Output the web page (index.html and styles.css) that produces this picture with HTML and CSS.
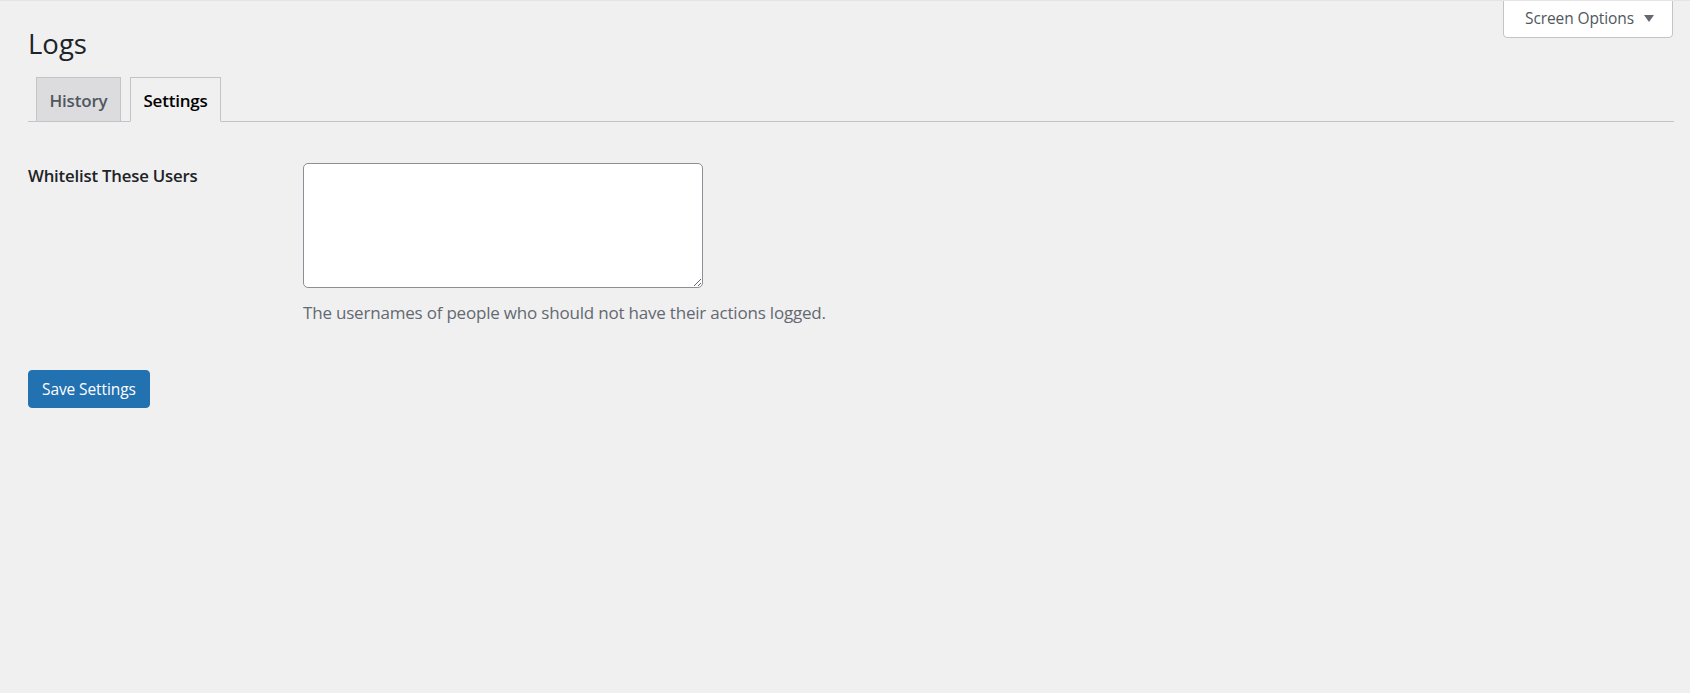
FILE: index.html
```html
<!DOCTYPE html>
<html lang="en">
  <head>
    <meta charset="UTF-8" />
    <meta name="viewport" content="width=device-width, initial-scale=1.0" />
    <title>Logs ‹ Settings</title>
    <link rel="stylesheet" href="styles.css">
  </head>
  <body>
    <div class="wrap">
      <div class="screen-meta-links">
        <button type="button" class="screen-meta-toggle">
          Screen Options
          <svg class="toggle-arrow" width="10" height="7" viewBox="0 0 10 7" aria-hidden="true">
            <path d="M0 0h10L5 7z" />
          </svg>
        </button>
      </div>

      <h1 class="page-title">Logs</h1>

      <nav class="nav-tab-wrapper">
        <a href="#history" class="nav-tab">History</a>
        <a href="#settings" class="nav-tab nav-tab-active">Settings</a>
      </nav>

      <form class="settings-form" method="post">
        <div class="form-row">
          <label for="whitelist" class="form-label">Whitelist These Users</label>
          <div class="form-field">
            <textarea id="whitelist" name="whitelist" class="field-textarea"></textarea>
            <p class="description">The usernames of people who should not have their actions logged.</p>
          </div>
        </div>

        <p class="submit">
          <button type="submit" class="button-primary">Save Settings</button>
        </p>
      </form>
    </div>
  </body>
</html>
```

FILE: styles.css
```css
:root {
  --page-bg: #f0f0f1;
  --text: #1d2327;
  --muted: #646970;
  --tab-text: #50575e;
  --border: #c3c4c7;
  --input-border: #8c8f94;
  --primary: #2271b1;
}
html {
  font-size: 16px;
}
body {
  margin: 0;
  min-height: 100vh;
  box-sizing: border-box;
  background-color: var(--page-bg);
  border-top: 1px solid #e4e4e5;
  color: var(--text);
  font-family: "Open Sans", "Noto Sans", sans-serif;
  -webkit-font-smoothing: antialiased;
}
.wrap {
  padding: 0 16px 0 28px;
}

/* Screen Options pull-down tab in the top right corner */
.screen-meta-links {
  float: right;
  margin-top: -2px;
  margin-right: 1px;
}
.screen-meta-toggle {
  display: flex;
  align-items: center;
  gap: 10px;
  width: 170px;
  height: 39px;
  padding: 0 0 2px 21px;
  box-sizing: border-box;
  background: #fff;
  border: 1px solid var(--border);
  border-radius: 0 0 4px 4px;
  color: var(--tab-text);
  font-family: inherit;
  font-size: 15.5px;
  letter-spacing: -0.1px;
  cursor: pointer;
}
.toggle-arrow {
  fill: #646970;
  margin-top: 1px;
}

.page-title {
  margin: 0;
  padding-top: 25px;
  font-size: 27.5px;
  font-weight: 400;
  line-height: 36px;
}

/* Tabs */
.nav-tab-wrapper {
  display: flex;
  margin-top: 15px;
  padding-left: 8px;
  border-bottom: 1px solid var(--border);
}
.nav-tab {
  margin: 0 9px -1px 0;
  padding: 7px 12.5px 5px;
  background: #dcdcde;
  border: 1px solid var(--border);
  color: var(--tab-text);
  font-size: 17px;
  font-weight: 600;
  letter-spacing: -0.2px;
  line-height: 31px;
  text-decoration: none;
}
.nav-tab-active {
  background: var(--page-bg);
  border-bottom-color: var(--page-bg);
  color: #000;
}

/* Settings table */
.form-row {
  display: grid;
  grid-template-columns: 275px 1fr;
  margin-top: 41px;
}
.form-label {
  padding-top: 1px;
  font-size: 16.8px;
  font-weight: 600;
  letter-spacing: -0.2px;
  line-height: 24px;
}
.field-textarea {
  display: block;
  width: 400px;
  height: 125px;
  box-sizing: border-box;
  margin: 0;
  background: #fff;
  border: 1px solid var(--input-border);
  border-radius: 5px;
  font-family: inherit;
  font-size: 16px;
}
.description {
  margin: 13px 0 0;
  color: var(--muted);
  font-size: 17px;
  letter-spacing: -0.2px;
  line-height: 24px;
}

.submit {
  margin: 45px 0 0;
}
.button-primary {
  height: 38px;
  padding: 0 13px;
  background: var(--primary);
  border: 1px solid var(--primary);
  border-radius: 4px;
  color: #fff;
  font-family: inherit;
  font-size: 15.5px;
  letter-spacing: -0.1px;
  cursor: pointer;
}
```
